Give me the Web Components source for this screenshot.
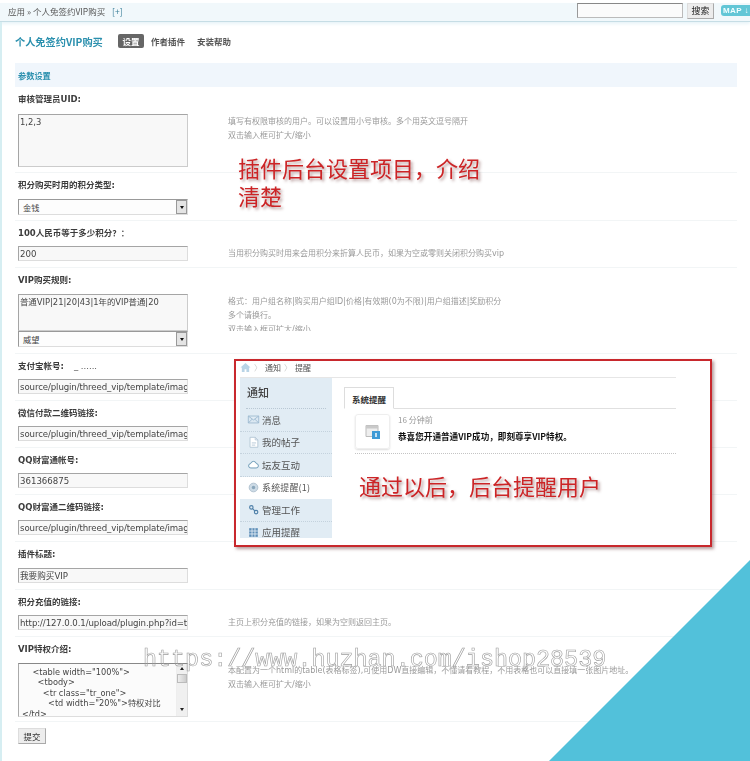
<!DOCTYPE html>
<html lang="zh"><head><meta charset="utf-8"><title>个人免签约VIP购买</title>
<style>
html,body{margin:0;padding:0;background:#fff}
body{width:750px;height:761px;overflow:hidden;font-family:"Noto Sans CJK SC",sans-serif}
</style></head><body>
<admin-page>
  <admin-topbar></admin-topbar>
  <plugin-header></plugin-header>
  <section-bar>参数设置</section-bar>

  <form-field label="审核管理员UID:" style="--label:27px;--after:5px">
    <text-box slot="control" h="53" multi>1,2,3</text-box>
    <help-text slot="help">填写有权限审核的用户。可以设置用小号审核。多个用英文逗号隔开<br>双击输入框可扩大/缩小</help-text>
  </form-field>
  <form-field label="积分购买时用的积分类型:" style="--label:26px;--after:5px">
    <select-box slot="control">金钱</select-box>
  </form-field>
  <form-field label="100人民币等于多少积分？：">
    <text-box slot="control">200</text-box>
    <help-text slot="help">当用积分购买时用来会用积分来折算人民币，如果为空或零则关闭积分购买vip</help-text>
  </form-field>
  <form-field label="VIP购买规则:" style="--label:26px">
    <div slot="control">
      <text-box h="37" multi>普通VIP|21|20|43|1年的VIP普通|20</text-box>
      <select-box>威望</select-box>
    </div>
    <help-text slot="help" style="height:37px">格式：用户组名称|购买用户组ID|价格|有效期(0为不限)|用户组描述|奖励积分<br>多个请换行。<br>双击输入框可扩大/缩小</help-text>
  </form-field>
  <form-field label="支付宝帐号:" extra="_ ......">
    <text-box slot="control" style="letter-spacing:-.1px">source/plugin/threed_vip/template/image/alipay.png</text-box>
  </form-field>
  <form-field label="微信付款二维码链接:">
    <text-box slot="control" style="letter-spacing:-.1px">source/plugin/threed_vip/template/image/wechat.png</text-box>
  </form-field>
  <form-field label="QQ财富通帐号:">
    <text-box slot="control">361366875</text-box>
  </form-field>
  <form-field label="QQ财富通二维码链接:">
    <text-box slot="control" style="letter-spacing:-.1px">source/plugin/threed_vip/template/image/qqpay.png</text-box>
  </form-field>
  <form-field label="插件标题:" style="--label:26px">
    <text-box slot="control">我要购买VIP</text-box>
  </form-field>
  <form-field label="积分充值的链接:">
    <text-box slot="control" style="letter-spacing:-.1px">http://127.0.0.1/upload/plugin.php?id=threed_vip</text-box>
    <help-text slot="help">主页上积分充值的链接，如果为空则返回主页。</help-text>
  </form-field>
  <form-field label="VIP特权介绍:" style="--label:26px;--after:4px">
    <code-box slot="control"></code-box>
    <help-text slot="help" style="width:420px">本配置为一个html的table(表格标签),可使用DW直接编辑，不懂请看教程，不用表格也可以直接填一张图片地址。<br>双击输入框可扩大/缩小</help-text>
  </form-field>
  <submit-button>提交</submit-button>

  <red-note style="left:238px;top:153px">插件后台设置项目<span style="font-family:'Noto Sans CJK TC'">，</span>介绍<br>清楚</red-note>
  <notice-shot></notice-shot>
  <corner-wedge></corner-wedge>
  <water-mark>https://www.huzhan.com/ishop28539</water-mark>
</admin-page>

<script>
function def(name, css, html, extra){
  customElements.define(name, class extends HTMLElement{
    constructor(){super();const r=this.attachShadow({mode:'open'});
      r.innerHTML='<style>'+css+'</style>'+(typeof html==='function'?html(this):html);}
    connectedCallback(){ if(extra) extra(this); }
  });
}
const CJK='"Noto Sans CJK SC",sans-serif';

def('admin-page',`:host{display:block;position:relative;width:750px;height:761px;overflow:hidden;box-sizing:border-box;
  padding-top:3px;color:#333;font-family:${CJK};filter:blur(.3px)}
  .strip{position:absolute;left:0;top:22px;bottom:0;width:2px;background:#d6eef2}`,
  `<div class="strip"></div><slot></slot>`);

def('admin-topbar',`:host{display:flex;align-items:flex-start;height:19px;box-sizing:border-box;background:#f1f8fb;
  border-bottom:1px solid #c6dde5;font-size:8.5px;color:#555;box-shadow:0 2px 3px #e8f4f8}
  .crumb{flex:1;padding:1px 0 0 8px;line-height:14px}.plus{color:#3b7f99;margin-left:5px}
  .search{width:106px;height:15px;box-sizing:border-box;background:#fbfbfb;border:1px solid #bbb;border-top-color:#888;border-left-color:#999}
  .go{width:27px;height:16px;margin-left:4px;box-sizing:border-box;background:#ececec;border:1px solid #aaa;border-top-color:#ddd;border-left-color:#ddd;
    color:#222;font-size:9px;line-height:14px;text-align:center}
  .map{width:29px;height:11px;margin:2px 0 0 7px;background:#62c6d6;border-radius:3px 0 0 3px;color:#f0feff;font:bold 8px/11px "Liberation Sans",sans-serif;padding-left:2px;box-sizing:border-box;white-space:nowrap;letter-spacing:.4px;overflow:hidden}`,
  `<div class="crumb">应用 » 个人免签约VIP购买 <span class="plus">[+]</span></div>
   <div class="search"></div><div class="go">搜索</div><div class="map">MAP ↓</div>`);

def('plugin-header',`:host{display:flex;align-items:center;height:41px;box-sizing:border-box;padding:0 0 3px 15px;font-size:8.5px;font-weight:700;color:#555}
  .t{font-size:10.2px;color:#2b90ae;width:103px;white-space:nowrap}
  .on{background:#666;color:#fff;border-radius:2px;padding:0 4.5px;line-height:14px;margin-right:7px}
  .o{margin-right:12px}`,
  `<div class="t">个人免签约VIP购买</div><div class="on">设置</div><div class="o">作者插件</div><div class="o">安装帮助</div>`);

def('section-bar',`:host{display:block;margin-left:15px;width:722px;height:24px;box-sizing:border-box;background:#f0f6fc;color:#2b90ae;
  font-size:8.2px;font-weight:700;line-height:24px;padding-left:3px}`,`<slot></slot>`);

def('form-field',`:host{display:block;margin-left:15px;width:722px;box-sizing:border-box;padding-left:3px;border-bottom:1px solid #f2f5f6}
  .l{height:var(--label,25px);font:700 8.5px/24px "DejaVu Sans",${CJK};color:#3c3c3c;white-space:nowrap}
  .x{margin-left:10px;font-weight:400;color:#555}
  .r{display:flex;padding-bottom:var(--after,6px)}
  .c{width:170px;flex:none}.h{margin-left:40px;min-width:0}`,
  h=>`<div class="l">${h.getAttribute('label')}${h.getAttribute('extra')?`<span class="x">${h.getAttribute('extra')}</span>`:''}</div>
  <div class="r"><div class="c"><slot name="control"></slot></div><div class="h"><slot name="help"></slot></div></div>`);

def('help-text',`:host{display:block;box-sizing:border-box;padding-top:1px;font:8px/14px "DejaVu Sans",${CJK};color:#9a9a9a;overflow:hidden;white-space:normal;width:440px}`,`<slot></slot>`);

def('text-box',`:host{display:block;box-sizing:border-box;height:15px;width:170px;overflow:hidden;background:#f8f8f8;
  border:1px solid #ddd;border-top-color:#a5a5a5;border-left-color:#a5a5a5;color:#444;font:8.6px/14px "DejaVu Sans",${CJK};padding:0 1px;white-space:nowrap}
  :host([multi]){line-height:12px;padding-top:1px;border-right-color:#ccc;border-bottom-color:#ccc;font-size:8.4px}`,`<slot></slot>`,
  e=>{if(e.getAttribute('h'))e.style.height=e.getAttribute('h')+'px';});

def('select-box',`:host{display:flex;align-items:center;box-sizing:border-box;height:16px;width:170px;background:#fdfdfd;
  border:1px solid #ddd;border-top-color:#999;border-left-color:#999;font-size:8.2px;color:#444;padding-left:4px;position:relative}
  .t{flex:1}.b{width:11px;height:14px;background:#e4e4e4;border:1px solid #999;box-sizing:border-box;display:flex;align-items:center;justify-content:center}
  .a{width:0;height:0;border:2.5px solid transparent;border-top:3px solid #111;border-bottom:0}`,
  `<div class="t"><slot></slot></div><div class="b"><div class="a"></div></div>`);

def('code-box',`:host{display:flex;box-sizing:border-box;height:54px;width:170px;background:#fbfbfb;border:1px solid #ddd;border-top-color:#888;border-left-color:#aaa;overflow:hidden}
  pre{flex:1;margin:0;padding:3px 0 0 3px;font:8.2px/10.4px "DejaVu Sans",${CJK};color:#444;overflow:hidden;white-space:pre}
  .s{width:11px;flex:none;background:#f0f0f0;display:flex;flex-direction:column;align-items:center;padding-top:3px;box-sizing:border-box;border-left:1px solid #eee}
  .u,.d{width:0;height:0;border:2px solid transparent}.u{border-bottom:3px solid #222;border-top:0}.d{border-top:3px solid #222;border-bottom:0;margin-top:auto;margin-bottom:5px}
  .th{width:10px;height:9px;margin-top:4px;box-sizing:border-box;background:linear-gradient(90deg,#eee,#ccc);border:1px solid #bbb}`,
  `<pre>    &lt;table width="100%"&gt;
      &lt;tbody&gt;
        &lt;tr class="tr_one"&gt;
          &lt;td width="20%"&gt;特权对比
&lt;/td&gt;</pre><div class="s"><div class="u"></div><div class="th"></div><div class="d"></div></div>`);

def('submit-button',`:host{display:block;margin:6px 0 0 18px;width:28px;height:16px;box-sizing:border-box;background:#ededed;border:1px solid #aaa;border-top-color:#ddd;border-left-color:#ddd;
  font-size:8.5px;line-height:14px;text-align:center;color:#333}`,`<slot></slot>`);

def('red-note',`:host{display:block;position:absolute;font:400 22px/28px ${CJK};color:#cc2426;text-shadow:2px 2px 3px rgba(90,30,30,.45);white-space:nowrap}`,`<slot></slot>`);

const ic={
 mail:'<path d="M1.500 3.500h12v8h-12z M1.500 3.500l6 4.500 6-4.500 M1.500 11.500l4.500-4.500 M13.500 11.500L9 7" fill="#dbe8f2" stroke="#9bb8d0"/>',
 doc:'<path d="M3.500 1.500h6l3 3v8.500h-9z" fill="#fff" stroke="#b0c4d4"/><path d="M9.500 1.500v3h3M5.500 8h5M5.500 10.500h4" fill="none" stroke="#b0c4d4"/>',
 cloud:'<path d="M4.500 11.500a2.500 2.500 0 0 1-.3-5 3.400 3.400 0 0 1 6.600 0 2.500 2.500 0 0 1-.3 5z" fill="#fff" stroke="#5c8fae"/>',
 gear:'<circle cx="7.500" cy="7.500" r="5" fill="#cddbe6" stroke="#a9bccb"/><circle cx="7.500" cy="7.500" r="2" fill="#8aa6bb"/>',
 link:'<circle cx="5" cy="5" r="2" fill="none" stroke="#4e7fa8" stroke-width="1.300"/><circle cx="10.500" cy="10.500" r="2" fill="none" stroke="#4e7fa8" stroke-width="1.300"/><path d="M6.500 6.500l2.500 2.500" stroke="#4e7fa8" stroke-width="1.300"/>',
 grid:'<path d="M2.500 2.500h10v10h-10z" fill="#5e8fb8"/><path d="M5.800 2.500v10M9.200 2.500v10M2.500 5.800h10M2.500 9.200h10" stroke="#e3edf4"/>'
};
def('notice-item',`:host{display:flex;align-items:center;height:22.500px;box-sizing:border-box;padding-left:7px;font-size:9.500px;color:#555;white-space:nowrap;border-bottom:1px dotted #c4d2dd}
  :host([on]){background:#fff;font-size:9px;letter-spacing:.15px;border-bottom:0}
  svg{width:13px;height:13px;margin-right:2px;flex:none}`,
  h=>`<svg viewBox="0 0 15 15">${ic[h.getAttribute('i')]}</svg><slot></slot>`);

def('notice-shot',`:host{display:block;position:absolute;left:234px;top:359px;width:478px;height:188px;box-sizing:border-box;background:#fff;
  border:2px solid #c8282d;box-shadow:2px 2px 3px rgba(110,60,60,.5);font-family:${CJK};overflow:visible;padding-left:4px;padding-right:34px}
  .crumb{display:flex;align-items:center;height:17px;box-sizing:border-box;padding-bottom:4px;border-bottom:1px solid #e6e6e6;font-size:8px;color:#555}
  .crumb svg{width:11px;height:11px;flex:none}.sep{color:#ccc;margin:0 3px;font-size:8px}
  .main{display:flex;height:160px;overflow:hidden}
  .side{width:92px;flex:none;background:#e1ecf4;height:160px;overflow:hidden}
  .head{height:30px;margin:0;padding:0 7px;box-sizing:border-box;font-size:11px;line-height:29px;font-weight:500;color:#444}
  .sx{height:0;margin:0 6px;border-top:1px dotted #b9c8d4}
  .right{flex:1;padding-left:12px}
  .tabs{height:31px;box-sizing:border-box;padding-top:9px;border-bottom:1px solid #e0e0e0;display:flex}
  .tab{width:50px;height:22px;box-sizing:border-box;border:1px solid #ddd;border-bottom:1px solid #fff;background:#fff;font-size:8.500px;font-weight:700;line-height:22px;text-align:center;color:#333}
  .msg{margin-left:11px;height:45px;box-sizing:border-box;border-bottom:1px dotted #c4c4c4;display:flex;padding-top:5px}
  .card{width:35px;height:35px;box-sizing:border-box;border:1px solid #eee;border-radius:3px;box-shadow:0 1px 2px #ddd;display:flex;align-items:center;justify-content:center}
  .card svg{width:16px;height:16px}
  .tx{margin-left:8px}.time{font-size:8px;line-height:14px;color:#999;margin-top:-1px}
  .b{font-size:8.600px;font-weight:700;line-height:12px;margin-top:3px;color:#111;white-space:nowrap}`,
  `<div class="crumb"><svg viewBox="0 0 12 12"><path d="M6 1L.5 6H2v5h3V8h2v3h3V6h1.500z" fill="#b9d4e6"/></svg><span class="sep">〉</span>通知<span class="sep">〉</span>提醒</div>
  <div class="main">
    <div class="side">
      <div class="head">通知</div><div class="sx"></div>
      <notice-item i="mail">消息</notice-item><notice-item i="doc">我的帖子</notice-item><notice-item i="cloud">坛友互动</notice-item>
      <notice-item i="gear" on>系统提醒(1)</notice-item><notice-item i="link">管理工作</notice-item><notice-item i="grid">应用提醒</notice-item>
    </div>
    <div class="right">
      <div class="tabs"><div class="tab">系统提醒</div></div>
      <div class="msg"><div class="card"><svg viewBox="0 0 16 16"><path d="M1 1.500h12v11H1z" fill="#eee" stroke="#bbb"/><path d="M1 1.500h12v3H1z" fill="#c9c9c9"/><path d="M7 7h8v8H7z" fill="#3e9ad6"/><path d="M11 9v4" stroke="#fff" stroke-width="1.400"/></svg></div>
        <div class="tx"><div class="time">16 分钟前</div><div class="b">恭喜您开通普通VIP成功，即刻尊享VIP特权。</div></div></div>
    </div>
  </div>
  <red-note style="left:123px;top:110px">通过以后<span style="font-family:'Noto Sans CJK TC'">，</span>后台提醒用户</red-note>`);

def('corner-wedge',`:host{display:block;position:absolute;right:0;bottom:0;width:201px;height:201px;background:#52c1da;clip-path:polygon(100% 0,100% 100%,0 100%)}`,``);

def('water-mark',`:host{display:block;position:absolute;left:143px;top:645px;font:400 23.400px/30px "Liberation Mono",monospace;color:transparent;-webkit-text-stroke:.6px #9c9c9c;white-space:nowrap}`,`<slot></slot>`);
</script>
</body></html>
